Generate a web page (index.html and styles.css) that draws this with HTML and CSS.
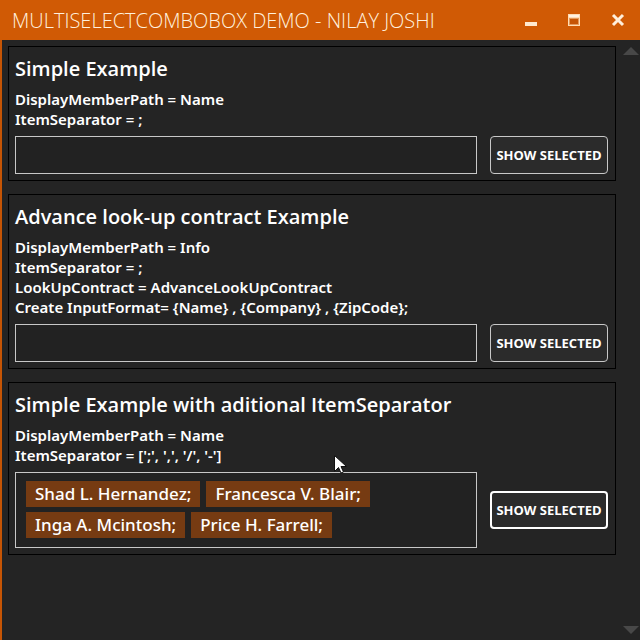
FILE: index.html
```
<!DOCTYPE html>
<html lang="en">
<head>
<meta charset="utf-8">
<title>MultiSelectComboBox Demo</title>
<link rel="stylesheet" href="styles.css">
</head>
<body>
<div class="window">
  <header class="titlebar">
    <h1 class="title">MULTISELECTCOMBOBOX DEMO - NILAY JOSHI</h1>
    <div class="controls">
      <button class="control" type="button" aria-label="Minimize"><svg width="14" height="14" viewBox="0 0 14 14"><path d="M0 9h12v4H0z" fill="#ffe9cf"/></svg></button>
      <button class="control" type="button" aria-label="Maximize"><svg width="14" height="14" viewBox="0 0 14 14"><path d="M0 1h12v12H0z" fill="#ffdcb4"/><path d="M1 2h10v2H1z" fill="#fff2e2"/><path d="M1 5h10v7H1z" fill="#e59a5c"/><path d="M2 6h8v5H2z" fill="#c65505"/></svg></button>
      <button class="control" type="button" aria-label="Close"><svg width="14" height="14" viewBox="0 0 14 14"><path d="M2 2l10 10M12 2L2 12" stroke="#ffeedb" stroke-width="3"/></svg></button>
    </div>
  </header>
  <div class="body">
    <main class="panels">
      <section class="panel">
        <h2 class="heading">Simple Example</h2>
        <p class="info">DisplayMemberPath = Name<br>ItemSeparator = ;</p>
        <div class="row">
          <input class="box" type="text" aria-label="Simple example">
          <button class="show" type="button">SHOW SELECTED</button>
        </div>
      </section>
      <section class="panel">
        <h2 class="heading">Advance look-up contract Example</h2>
        <p class="info">DisplayMemberPath = Info<br>ItemSeparator = ;<br>LookUpContract = AdvanceLookUpContract<br>Create InputFormat= {Name} , {Company} , {ZipCode};</p>
        <div class="row">
          <input class="box" type="text" aria-label="Advance look-up contract example">
          <button class="show" type="button">SHOW SELECTED</button>
        </div>
      </section>
      <section class="panel">
        <h2 class="heading">Simple Example with aditional ItemSeparator</h2>
        <p class="info">DisplayMemberPath = Name<br>ItemSeparator = [';', ',', '/', '-']</p>
        <div class="row">
          <div class="box tags">
            <span class="tag">Shad L. Hernandez;</span>
            <span class="tag">Francesca V. Blair;</span>
            <span class="tag">Inga A. Mcintosh;</span>
            <span class="tag">Price H. Farrell;</span>
            <input class="entry" type="text" aria-label="Add a name">
          </div>
          <button class="show focused" type="button">SHOW SELECTED</button>
        </div>
      </section>
    </main>
    <div class="scrollbar">
      <button class="arrow" type="button" aria-label="Scroll up"><svg width="16" height="8" viewBox="0 0 16 8"><path d="M0 8L8 0l8 8z" fill="#484848"/></svg></button>
      <button class="arrow" type="button" aria-label="Scroll down"><svg width="16" height="8" viewBox="0 0 16 8"><path d="M0 0h16L8 8z" fill="#484848"/></svg></button>
    </div>
  </div>
  <svg class="pointer" width="13" height="19" viewBox="0 0 13 19"><path d="M.5.5v16l4-4 2.500 5.500 2.500-1-2.500-5.500h5.500z" fill="#fff" stroke="#111"/></svg>
</div>
</body>
</html>
```
FILE: styles.css
```
* { box-sizing: border-box; }
body {
  margin: 0;
  background: #242424;
  color: #fff;
  font-family: "Noto Sans", "Open Sans", sans-serif;
}
button, input { font: inherit; color: inherit; }
.window {
  position: relative;
  display: flex;
  flex-direction: column;
  min-height: 100vh;
}
.titlebar {
  display: flex;
  justify-content: space-between;
  align-items: center;
  height: 40px;
  padding: 0 9px 0 12px;
  background: #d05a05;
}
.title {
  margin: 0;
  padding-top: 2px;
  font-family: "Open Sans", "Noto Sans", sans-serif;
  font-size: 20px;
  font-weight: 300;
  line-height: 28px;
  color: #fff0dd;
  white-space: nowrap;
}
.controls { display: flex; gap: 16px; }
.control {
  display: flex;
  align-items: center;
  justify-content: center;
  width: 27px;
  height: 28px;
  padding: 0;
  border: 0;
  background: none;
}
.body {
  flex: 1;
  display: flex;
  border-left: 2px solid #c65505;
}
.panels {
  flex: 1;
  display: flex;
  flex-direction: column;
  gap: 13px;
  padding: 6px 0 0 6px;
}
.panel {
  padding: 6px 7px 6px 6px;
  border: 1px solid #000;
}
.heading {
  margin: 0 0 4px;
  font-family: "Open Sans", "Noto Sans", sans-serif;
  font-size: 20px;
  font-weight: 600;
  line-height: 32px;
}
.info {
  margin: 0 0 7px;
  font-size: 15px;
  font-weight: 600;
  line-height: 20px;
}
.row {
  display: flex;
  align-items: center;
  gap: 13px;
}
.box {
  flex: 1;
  min-width: 0;
  height: 38px;
  padding: 0 10px;
  border: 1px solid #c8c8c8;
  background: #222;
}
.tags {
  display: flex;
  flex-wrap: wrap;
  gap: 5px 6px;
  height: auto;
  padding: 8px 10px 9px;
}
.tag {
  padding: 0 9px;
  background: #763b12;
  font-size: 17px;
  font-weight: 500;
  line-height: 26px;
}
.entry {
  flex: 1;
  width: 20px;
  min-width: 0;
  height: 26px;
  padding: 0;
  border: 0;
  background: none;
}
.show {
  width: 118px;
  height: 38px;
  padding: 0;
  border: 1px solid #c8c8c8;
  border-radius: 4px;
  background: #2b2b2b;
  font-family: "Open Sans", "Noto Sans", sans-serif;
  font-size: 13px;
  font-weight: 700;
  white-space: nowrap;
}
.focused { border: 2px solid #fff; }
.scrollbar {
  display: flex;
  flex-direction: column;
  justify-content: space-between;
  width: 24px;
  padding: 7px 0 6px 7px;
}
.arrow {
  display: flex;
  padding: 0;
  border: 0;
  background: none;
}
.pointer {
  position: absolute;
  left: 334px;
  top: 455px;
}
```
